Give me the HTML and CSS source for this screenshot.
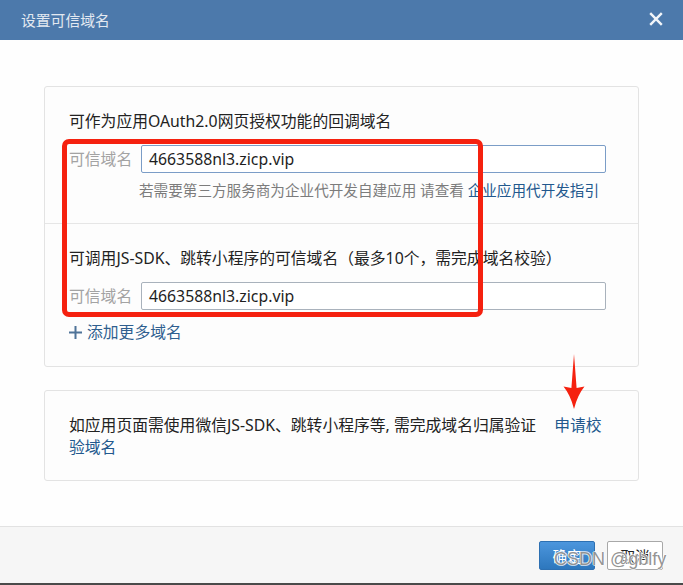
FILE: index.html
```html
<!DOCTYPE html>
<html lang="zh-CN">
<head>
<meta charset="utf-8">
<title>设置可信域名</title>
<link rel="stylesheet" href="styles.css">
</head>
<body>
<div class="dialog">
  <header class="hd">
    <span class="title">设置可信域名</span>
    <button class="close" aria-label="关闭">
      <svg width="14" height="14" viewBox="0 0 14 14"><path d="M1.2 1.2 L12.8 12.8 M12.8 1.2 L1.2 12.8" stroke="#f2f5f9" stroke-width="2.4" fill="none"/></svg>
    </button>
  </header>
  <main class="bd">
    <section class="card">
      <div class="sec">
        <p class="sec-title">可作为应用OAuth2.0网页授权功能的回调域名</p>
        <div class="field">
          <span class="label">可信域名</span>
          <div class="input focus">4663588nl3.zicp.vip</div>
        </div>
        <p class="hint">若需要第三方服务商为企业代开发自建应用 请查看 <a class="link">企业应用代开发指引</a></p>
      </div>
      <div class="sec sec-last">
        <p class="sec-title">可调用JS-SDK、跳转小程序的可信域名（最多10个，需完成域名校验）</p>
        <div class="field">
          <span class="label">可信域名</span>
          <div class="input">4663588nl3.zicp.vip</div>
        </div>
        <a class="add">
          <svg class="plus" width="13" height="13" viewBox="0 0 13 13"><path d="M6.5 0 V13 M0 6.5 H13" stroke="#4f7398" stroke-width="2" fill="none"/></svg>
          <span>添加更多域名</span>
        </a>
      </div>
    </section>
    <section class="card card2">
      <p class="verify">如应用页面需使用微信JS-SDK、跳转小程序等, 需完成域名归属验证<a class="link gap">申请校验域名</a></p>
    </section>
  </main>
  <footer class="ft">
    <button class="btn primary">确定</button>
    <button class="btn">取消</button>
  </footer>
</div>
<div class="annot-box"></div>
<svg class="annot-arrow" width="24" height="58" viewBox="0 0 24 58"><path d="M12 1 L14.6 35 L22.5 33.5 Q15.5 42 12 56 Q8.5 42 1.5 33.5 L9.4 35 Z" fill="#f5210f"/></svg>
<div class="watermark">CSDN @gblfy</div>
</body>
</html>
```
FILE: styles.css
```css
html, body {
  margin: 0;
  padding: 0;
  height: 585px;
  overflow: hidden;
}
body {
  background: #4a4a4a;
  font-family: "Noto Sans", "Noto Sans CJK SC", sans-serif;
  color: #222;
  position: relative;
}
p { margin: 0; }
.dialog {
  height: 583px;
  background: #fefefe;
  display: flex;
  flex-direction: column;
}
.hd {
  height: 40px;
  flex: none;
  background: #4c79ab;
  display: flex;
  align-items: center;
  justify-content: space-between;
  padding: 0 20px 0 21px;
}
.title {
  font-family: "Noto Sans CJK SC", sans-serif;
  font-size: 14.8px;
  line-height: 20px;
  color: #e3e9f1;
  margin-top: -1px;
}
.close {
  border: 0;
  background: none;
  padding: 0;
  width: 14px;
  height: 14px;
  display: block;
  margin-bottom: 3px;
}
.close svg { display: block; }
.bd {
  flex: 1;
  padding: 46px 44px 0;
}
.card {
  border: 1px solid #e3e3e3;
  border-radius: 3px;
  background: #fdfdfd;
}
.sec {
  padding: 22px 24px 23px;
  border-bottom: 1px solid #e6e6e6;
}
.sec-last {
  border-bottom: 0;
  padding-bottom: 24px;
}
.sec-title {
  font-size: 15.8px;
  line-height: 24px;
  color: #222;
  white-space: nowrap;
}
.field {
  display: flex;
  align-items: center;
  margin-top: 12px;
}
.label {
  width: 72px;
  flex: none;
  font-size: 15.8px;
  line-height: 28px;
  color: #a3a3a3;
}
.input {
  width: 465px;
  height: 28px;
  box-sizing: border-box;
  border: 1px solid #a9b2bc;
  border-radius: 2px;
  background: #fff;
  padding: 0 7px;
  font-size: 15.8px;
  line-height: 26px;
  color: #1e1e1e;
}
.input.focus {
  border-color: #7b9dc7;
}
.hint {
  margin-top: 7px;
  padding-left: 70px;
  font-size: 14.6px;
  line-height: 20px;
  color: #7c7c7c;
  white-space: nowrap;
}
.link {
  color: #22588d;
  text-decoration: none;
}
.add {
  display: flex;
  align-items: center;
  margin-top: 12px;
  height: 20px;
  color: #2f5f8f;
  font-size: 15.8px;
  line-height: 20px;
}
.plus {
  display: block;
  margin-right: 5px;
}
.card2 {
  margin-top: 23px;
  padding: 23px 24px 22px;
}
.verify {
  font-size: 15.8px;
  line-height: 22px;
  color: #222;
}
.gap {
  margin-left: 18px;
}
.ft {
  flex: none;
  height: 42px;
  border-top: 1px solid #e2e2e2;
  background: #f6f6f6;
  display: flex;
  justify-content: flex-end;
  align-items: flex-start;
  gap: 12px;
  padding: 14px 20px 0;
}
.btn {
  width: 56px;
  height: 29px;
  box-sizing: border-box;
  border: 1px solid #a8a8a8;
  border-radius: 2px;
  background: #fff;
  color: #222;
  font-family: "Noto Sans CJK SC", sans-serif;
  font-size: 14.6px;
  line-height: 27px;
  padding: 0;
}
.btn.primary {
  background: linear-gradient(#4c96dd, #2d77bd);
  border-color: #2d70b2;
  color: #fff;
}
.annot-box {
  position: absolute;
  left: 62px;
  top: 139px;
  width: 421px;
  height: 178px;
  box-sizing: border-box;
  border: 5px solid #f5210f;
  border-radius: 7px;
}
.annot-arrow {
  position: absolute;
  left: 562px;
  top: 353px;
  display: block;
}
.watermark {
  position: absolute;
  left: 554px;
  top: 550px;
  font-family: "Liberation Sans", Arial, sans-serif;
  font-size: 18px;
  line-height: 18px;
  color: rgba(120, 120, 120, 0.8);
  text-shadow: 1px 0 0 rgba(255,255,255,0.7), -1px 0 0 rgba(255,255,255,0.7), 0 1px 0 rgba(255,255,255,0.7), 0 -1px 0 rgba(255,255,255,0.7);
  white-space: nowrap;
}
```
